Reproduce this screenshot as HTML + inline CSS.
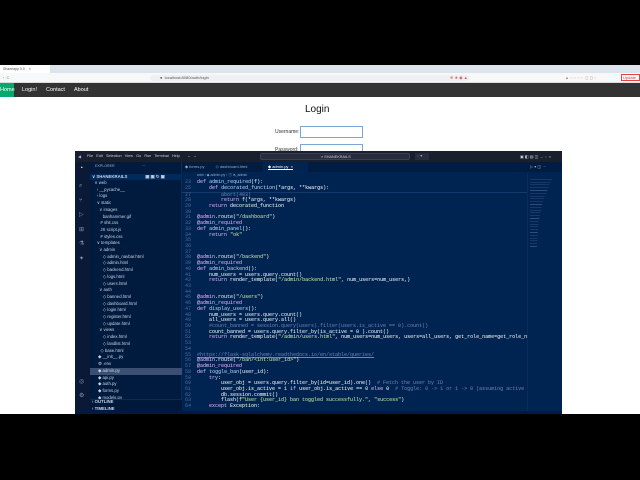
<!DOCTYPE html>
<html><head><meta charset="utf-8"><style>
*{margin:0;padding:0;box-sizing:border-box}
body{width:640px;height:480px;background:#000;position:relative;overflow:hidden;font-family:"Liberation Sans",sans-serif}
.a{position:absolute;white-space:pre}
#tabs{left:0;top:65px;width:640px;height:8px;background:#dde3ea}
#addr{left:0;top:73px;width:640px;height:10px;background:#f7f8fa;border-bottom:1px solid #ddd}
#nav{left:0;top:83px;width:640px;height:14px;background:#333}
#page{left:0;top:97px;width:640px;height:317px;background:#fff}
.nv{color:#fff;font-size:5.5px;top:87px}
#vs{left:75px;top:151px;width:487px;height:263px;background:#002451;overflow:hidden}
.code{font-family:"Liberation Mono",monospace;font-size:5px;color:#fff;line-height:5.72px}
.ln{color:#4f6a99}
.k{color:#ebbbff}.s{color:#d1f1a9}.f{color:#bbdaff}.c{color:#7285b7}.d{color:#ebbbff}
.ex{font-size:4.3px;color:#c8d4ea;line-height:6.7px}
</style></head><body>
<div class="a" id="tabs"></div>
<div class="a" style="left:0;top:65px;width:50px;height:8px;background:#fff;font-size:3.5px;color:#555;padding:2px 0 0 3px">Shaneapp 0.0    ×</div>
<div class="a" id="addr"></div>
<div class="a" style="left:150px;top:75px;width:320px;height:6px;background:#eef0f3;border-radius:3px"></div>
<div class="a" style="left:160px;top:75px;font-size:4px;color:#555">●  localhost:8080/auth/login</div>
<div class="a" style="left:3px;top:75px;font-size:4px;color:#777">›  C</div>
<div class="a" style="left:450px;top:75px;font-size:4px;color:#c55">⊕ ★ ◉ ▲</div>
<div class="a" style="left:565px;top:75px;font-size:4px;color:#c77">▲ ◌ ◌ ◌ ◌  ◻ ◻ ◌</div>
<div class="a" style="left:621px;top:74px;width:19px;height:7px;border:1px solid #d44;font-size:4px;color:#d44;padding-left:1px">Update</div>
<div class="a" id="nav"></div>
<div class="a" style="left:0;top:83px;width:14px;height:14px;background:#04aa6d"></div>
<div class="a nv" style="left:0">Home</div>
<div class="a nv" style="left:22px">Login!</div>
<div class="a nv" style="left:46px">Contact</div>
<div class="a nv" style="left:74px">About</div>
<div class="a" id="page"></div>
<div class="a" style="left:305px;top:104px;font-size:10px;color:#111">Login</div>
<div class="a" style="left:275px;top:129px;font-size:5px;color:#333">Username:</div>
<div class="a" style="left:300px;top:126px;width:63px;height:12px;border:1px solid #7aa7d6;background:#fff"></div>
<div class="a" style="left:275px;top:147px;font-size:5px;color:#333">Password:</div>
<div class="a" style="left:300px;top:144px;width:63px;height:12px;border:1px solid #7aa7d6;background:#fff"></div>

<div class="a" id="vs">
 <div class="a" style="left:0;top:0;width:487px;height:11px;background:#1a1f2e"></div>
 <div class="a" style="left:3px;top:3px;font-size:4px;color:#8fb4ff">◀</div>
 <div class="a" style="left:12px;top:3px;font-size:3.8px;color:#c9cfdb">File   Edit   Selection   View   Go   Run   Terminal   Help       ←  →</div>
 <div class="a" style="left:185px;top:2px;width:150px;height:7px;background:#272d3d;border:1px solid #3a4154;border-radius:2px;font-size:3.8px;color:#c9cfdb;padding:1px 0 0 60px">⌕ SHANEKRAILS</div>
 <div class="a" style="left:340px;top:2px;width:14px;height:7px;background:#272d3d;font-size:3.8px;color:#aaa;padding-left:2px">◌ ▾</div>
 <div class="a" style="left:445px;top:3px;font-size:4px;color:#c9cfdb">▣ ◧ ▤ ◫  –  ▫  ×</div>
 <div class="a" style="left:0;top:11px;width:15px;height:252px;background:#0a1a36"></div>
 <div class="a" style="left:4px;top:14px;font-size:7px;color:#ddd">◔</div>
 <div class="a" style="left:4px;top:28px;font-size:6px;color:#8a94aa;line-height:14.5px">⌕<br>⑂<br>▷<br>⊞<br>⚗<br>✦</div>
 <div class="a" style="left:4px;top:224px;font-size:6px;color:#8a94aa;line-height:14px">◎<br>⚙</div>
 <div class="a" style="left:15px;top:11px;width:92px;height:252px;background:#001b3d;border-right:1px solid #0e2b55"></div>
 <div class="a" style="left:20px;top:13px;font-size:3.6px;color:#aab">EXPLORER                           ···</div>
 <div class="a" style="left:15px;top:23px;width:92px;height:6px;background:#012a5c"></div>
 <div class="a ex" style="left:17px;top:22.5px;font-weight:bold">∨ SHANEKRAILS               ▣ ▣ ↻ ▣</div>
 <div class="a ex" style="left:17px;top:29px">  ∨ web
    › __pycache__
    › logs
    ∨ static
      ∨ images
         banhammer.gif
       # shit.css
       JS script.js
       # styles.css
    ∨ templates
      ∨ admin
         ◇ admin_navbar.html
         ◇ admin.html
         ◇ backend.html
         ◇ logs.html
         ◇ users.html
      ∨ auth
         ◇ banned.html
         ◇ dashboard.html
         ◇ login.html
         ◇ register.html
         ◇ update.html
      ∨ views
         ◇ index.html
         ◇ landlist.html
       ◇ base.html
     ◆ __init__.py
     ⚙ .env</div>
 <div class="a" style="left:15px;top:217px;width:92px;height:7px;background:#3b4f72"></div>
 <div class="a ex" style="left:17px;top:217px">     ◆ admin.py
     ◆ api.py
     ◆ auth.py
     ◆ forms.py
     ◆ models.py</div>
 <div class="a" style="left:15px;top:248px;width:92px;height:15px;background:#00183a;border-top:1px solid #0e2b55"></div>
 <div class="a ex" style="left:17px;top:248px;font-weight:bold">› OUTLINE
› TIMELINE</div>
 <div class="a" style="left:107px;top:11px;width:380px;height:10px;background:#001c40"></div>
 <div class="a" style="left:110px;top:13px;font-size:4px;color:#9aa9c6">◆ forms.py          ◇ dashboard.html          </div>
 <div class="a" style="left:188px;top:11px;width:45px;height:10px;background:#002451;font-size:4px;color:#fff;padding:2px 0 0 5px;text-decoration:underline">◆ admin.py  ×</div>
 <div class="a" style="left:455px;top:13px;font-size:4px;color:#9aa9c6">▷ ▾ ◫ ···</div>
 <div class="a" style="left:122px;top:22px;font-size:3.6px;color:#9aa9c6">web › ◆ admin.py › ⓕ is_admin</div>
 <div class="a code" style="left:110px;top:29px"><span class="ln">23</span>  <span class="k">def</span> <span class="f">admin_required</span>(f):
<span class="ln">25</span>      <span class="k">def</span> <span class="f">decorated_function</span>(*args, **kwargs):</div>
 <div class="a" style="left:107px;top:41px;width:345px;height:1px;background:#123a6e"></div>
 <div class="a code" style="left:110px;top:41.5px"><span class="ln">27</span>          <span class="c">abort(403)</span>
<span class="ln">28</span>          <span class="k">return</span> f(*args, **kwargs)
<span class="ln">29</span>      <span class="k">return</span> decorated_function
<span class="ln">30</span>
<span class="ln">31</span>  <span class="d">@admin</span>.route(<span class="s">"/dashboard"</span>)
<span class="ln">32</span>  <span class="d">@admin_required</span>
<span class="ln">33</span>  <span class="k">def</span> <span class="f">admin_panel</span>():
<span class="ln">34</span>      <span class="k">return</span> <span class="s">"ok"</span>
<span class="ln">35</span>
<span class="ln">36</span>
<span class="ln">37</span>
<span class="ln">38</span>  <span class="d">@admin</span>.route(<span class="s">"/backend"</span>)
<span class="ln">39</span>  <span class="d">@admin_required</span>
<span class="ln">40</span>  <span class="k">def</span> <span class="f">admin_backend</span>():
<span class="ln">41</span>      num_users = users.query.count()
<span class="ln">42</span>      <span class="k">return</span> render_template(<span class="s">"/admin/backend.html"</span>, num_users=num_users,)
<span class="ln">43</span>
<span class="ln">44</span>
<span class="ln">45</span>  <span class="d">@admin</span>.route(<span class="s">"/users"</span>)
<span class="ln">46</span>  <span class="d">@admin_required</span>
<span class="ln">47</span>  <span class="k">def</span> <span class="f">display_users</span>():
<span class="ln">48</span>      num_users = users.query.count()
<span class="ln">49</span>      all_users = users.query.all()
<span class="ln">50</span>      <span class="c">#count_banned = session.query(users).filter(users.is_active == 0).count()</span>
<span class="ln">51</span>      count_banned = users.query.filter_by(is_active = 0 ).count()
<span class="ln">52</span>      <span class="k">return</span> render_template(<span class="s">"/admin/users.html"</span>, num_users=num_users, users=all_users, get_role_name=get_role_name, count_banne
<span class="ln">53</span>
<span class="ln">54</span>
<span class="ln">55</span>  <span class="c" style="text-decoration:underline">#https://flask-sqlalchemy.readthedocs.io/en/stable/queries/</span>
<span class="ln">56</span>  <span class="d">@admin</span>.route(<span class="s">"/ban/&lt;int:user_id&gt;"</span>)
<span class="ln">57</span>  <span class="d">@admin_required</span>
<span class="ln">58</span>  <span class="k">def</span> <span class="f">toggle_ban</span>(user_id):
<span class="ln">59</span>      <span class="k">try</span>:
<span class="ln">60</span>          user_obj = users.query.filter_by(id=user_id).one()  <span class="c"># Fetch the user by ID</span>
<span class="ln">61</span>          user_obj.is_active = 1 <span class="k">if</span> user_obj.is_active == 0 <span class="k">else</span> 0  <span class="c"># Toggle: 0 -&gt; 1 or 1 -&gt; 0 (assuming active is int)</span>
<span class="ln">62</span>          db.session.commit()
<span class="ln">63</span>          flash(f<span class="s">"User {user_id} ban toggled successfully."</span>, <span class="s">"success"</span>)
<span class="ln">64</span>      <span class="k">except</span> Exception:</div>
 <div class="a" style="left:452px;top:22px;width:35px;height:241px;background:#002451;border-left:1px solid #0e2b55"></div>
 <div class="a" style="left:455px;top:28px;width:22px;height:70px;background:repeating-linear-gradient(90deg,transparent 0 0px,transparent 0),repeating-linear-gradient(#5c709b 0 0.6px,transparent 0.6px 2.8px);opacity:.55;clip-path:polygon(0 0,100% 0,60% 30%,40% 60%,30% 100%,0 100%)"></div>
 <div class="a" style="left:0;top:260px;width:487px;height:3px;background:#001b3d"></div>
</div>
</body></html>
